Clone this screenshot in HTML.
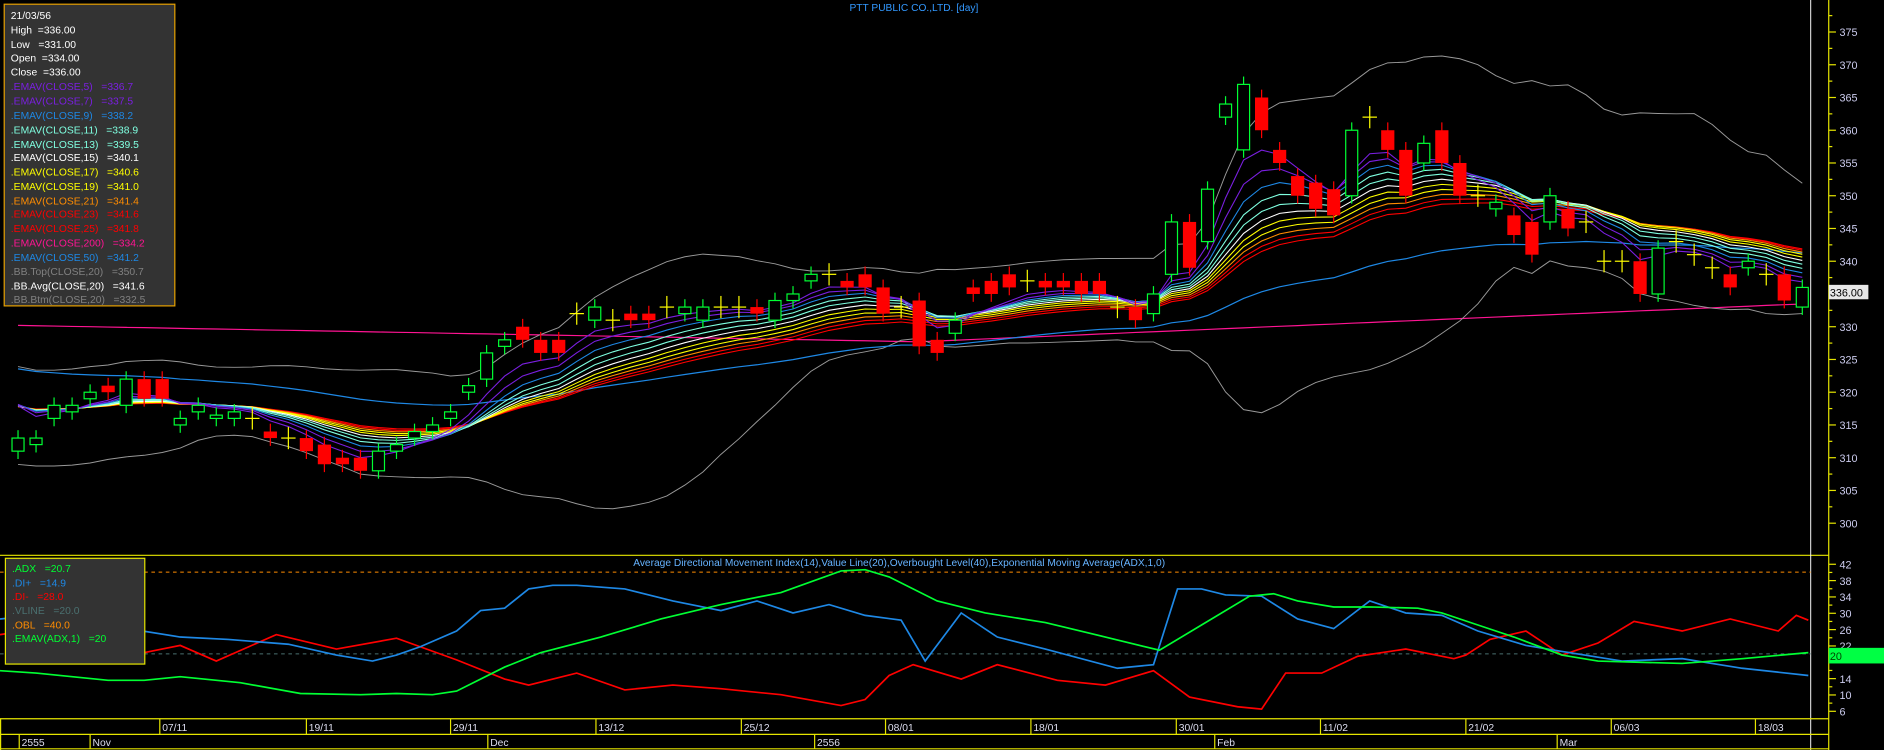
<!DOCTYPE html>
<html><head><meta charset="utf-8"><style>
html,body{margin:0;padding:0;background:#000;overflow:hidden}
svg{display:block}
text{font-family:"Liberation Sans",Arial,sans-serif;white-space:pre}
</style></head><body>
<svg id="s" width="1884" height="750" viewBox="0 0 1568 624" preserveAspectRatio="none" xmlns="http://www.w3.org/2000/svg" xml:space="preserve">
<rect width="1568" height="624" fill="#000"/>
<g id="main"></g>
<line x1="0" y1="462" x2="1522" y2="462" stroke="#e6e600" stroke-width="1"/>
<line x1="1522" y1="0" x2="1522" y2="624" stroke="#e6e600" stroke-width="1"/>
<line x1="1507" y1="0" x2="1507" y2="624" stroke="#fff" stroke-width="0.8"/>
<line x1="0" y1="598" x2="1522" y2="598" stroke="#e6e600"/>
<line x1="0" y1="611" x2="1522" y2="611" stroke="#e6e600"/>
<line x1="0" y1="623" x2="1522" y2="623" stroke="#e6e600"/>
<line x1="0.5" y1="598" x2="0.5" y2="624" stroke="#e6e600"/>
<text x="707" y="9" font-size="8.5" fill="#3399ff">PTT PUBLIC CO.,LTD. [day]</text>
<text x="527" y="471" font-size="8.5" fill="#66b3ff">Average Directional Movement Index(14),Value Line(20),Overbought Level(40),Exponential Moving Average(ADX,1,0)</text>
<g id="ind"></g>
<g id="axis"></g>
<g id="dates"></g>
<rect x="3.5" y="3.5" width="142" height="251" fill="#333" stroke="#e6a000" stroke-width="1"/>
<g font-size="8.6">
<text x="9" y="16" fill="#fff">21/03/56</text>
<text x="9" y="28" fill="#fff">High  =336.00</text>
<text x="9" y="40" fill="#fff">Low   =331.00</text>
<text x="9" y="51" fill="#fff">Open  =334.00</text>
<text x="9" y="63" fill="#fff">Close  =336.00</text>
<text x="9" y="75" fill="#7a1fe0">.EMAV(CLOSE,5)   =336.7</text>
<text x="9" y="87" fill="#7a1fe0">.EMAV(CLOSE,7)   =337.5</text>
<text x="9" y="99" fill="#1e88e5">.EMAV(CLOSE,9)   =338.2</text>
<text x="9" y="111" fill="#7fffe0">.EMAV(CLOSE,11)   =338.9</text>
<text x="9" y="123" fill="#7fffe0">.EMAV(CLOSE,13)   =339.5</text>
<text x="9" y="134" fill="#fff">.EMAV(CLOSE,15)   =340.1</text>
<text x="9" y="146" fill="#ffff00">.EMAV(CLOSE,17)   =340.6</text>
<text x="9" y="158" fill="#ffff00">.EMAV(CLOSE,19)   =341.0</text>
<text x="9" y="170" fill="#ff8c00">.EMAV(CLOSE,21)   =341.4</text>
<text x="9" y="181" fill="#ff0000">.EMAV(CLOSE,23)   =341.6</text>
<text x="9" y="193" fill="#ff0000">.EMAV(CLOSE,25)   =341.8</text>
<text x="9" y="205" fill="#ff1493">.EMAV(CLOSE,200)   =334.2</text>
<text x="9" y="217" fill="#1e88e5">.EMAV(CLOSE,50)   =341.2</text>
<text x="9" y="229" fill="#808080">.BB.Top(CLOSE,20)   =350.7</text>
<text x="9" y="241" fill="#fff">.BB.Avg(CLOSE,20)   =341.6</text>
<text x="9" y="252" fill="#808080">.BB.Btm(CLOSE,20)   =332.5</text>
</g>
<rect x="4.5" y="464.5" width="116" height="88" fill="#333" stroke="#e6e600" stroke-width="1"/>
<g font-size="8.6">
<text x="10" y="476" fill="#00ff33">.ADX   =20.7</text>
<text x="10" y="488" fill="#1e88e5">.DI+   =14.9</text>
<text x="10" y="499" fill="#ff0000">.DI-   =28.0</text>
<text x="10" y="511" fill="#4a7070">.VLINE   =20.0</text>
<text x="10" y="523" fill="#ff8c00">.OBL   =40.0</text>
<text x="10" y="534" fill="#00ff33">.EMAV(ADX,1)   =20</text>
</g>
</svg>
<script>
(function(){
var NS="http://www.w3.org/2000/svg";
function el(p,t,a,txt){var e=document.createElementNS(NS,t);for(var k in a)e.setAttribute(k,a[k]);if(txt!=null)e.textContent=txt;document.getElementById(p).appendChild(e);return e;}
function py(p){return 435.3-(p-300)*5.449;}
function iy(v){return 591.8-(v-6)*3.398;}
var B=[[311,313],[312,313],[316,318],[317,318],[319,320],[321,320],[318,322],[322,319],[322,319],[315,316],[317,318],[316,316.5],[316,317],[316,316],[314,313],[313,313],[313,311],[312,309],[310,309],[310,308],[308,311],[311,312],[313,314],[314,315],[316,317],[320,321],[322,326],[327,328],[330,328],[328,326],[328,326],[332,332],[331,333],[331,331],[332,331],[332,331],[333,333],[332,333],[331,333],[333,333],[333,333],[333,332],[331,334],[334,335],[337,338],[338,338],[337,336],[338,336],[336,332],[333,333],[334,327],[328,326],[329,331],[336,335],[337,335],[338,336],[337,337],[337,336],[337,336],[337,335],[337,335],[333,333],[333,331],[332,335],[338,346],[346,339],[343,351],[362,364],[357,367],[365,360],[357,355],[353,350],[352,348],[351,347],[350,360],[362,362],[360,357],[357,350],[355,358],[360,355],[355,350],[350,350],[348,349],[347,344],[346,341],[346,350],[348,345],[346,346],[340,340],[340,340],[340,335],[335,342],[343,343],[341,341],[339,339],[338,336],[339,340],[338,338],[338,334],[333,336]];
var hist=[318,322,325,327,326,324,321,318,315,313,312,313,315,314,312,311,313,316,318,319,320,322,323,321,320];
var C=hist.concat(B.map(function(b){return b[1];}));
var H=hist.length;
function X(i){return 15+15*i;}
function pts(arr){return arr.map(function(v,i){return X(i).toFixed(1)+","+py(v).toFixed(1);}).join(" ");}
var e200=B.map(function(b,i){return i<=50?330.2-i*0.05:327.7+(i-50)*0.118;});
el("main","polyline",{points:pts(e200),fill:"none",stroke:"#ff1493","stroke-width":1});
var bbt=[],bbb=[];
for(var i=0;i<B.length;i++){var s=0,q=0,j;for(j=H+i-19;j<=H+i;j++){s+=C[j];}var m=s/20;for(j=H+i-19;j<=H+i;j++){q+=(C[j]-m)*(C[j]-m);}var sd=Math.sqrt(q/20);bbt.push(m+2*sd);bbb.push(m-2*sd);}
el("main","polyline",{points:pts(bbt),fill:"none",stroke:"#999","stroke-width":0.8});
el("main","polyline",{points:pts(bbb),fill:"none",stroke:"#999","stroke-width":0.8});
var e50=[],e=324,k=2/51;for(i=0;i<B.length;i++){e=e+k*(B[i][1]-e);e50.push(e);}
el("main","polyline",{points:pts(e50),fill:"none",stroke:"#1e88e5","stroke-width":1});
var R=[[25,"#ff0000"],[23,"#ff0000"],[21,"#ff8c00"],[19,"#ffff00"],[17,"#ffff00"],[15,"#ffffff"],[13,"#7fffe0"],[11,"#7fffe0"],[9,"#1e88e5"],[7,"#7a1fe0"],[5,"#7a1fe0"]];
R.forEach(function(r){var kk=2/(r[0]+1),ee=C[0],out=[];for(var ii=0;ii<C.length;ii++){ee=ee+kk*(C[ii]-ee);if(ii>=H)out.push(ee);}el("main","polyline",{points:pts(out),fill:"none",stroke:r[1],"stroke-width":0.9});});
B.forEach(function(b,i){var x=X(i),o=b[0],c=b[1],hi=Math.max(o,c)+1.2,lo=Math.min(o,c)-1.2;
 if(Math.abs(o-c)<0.3){el("main","line",{x1:x,y1:py(hi+0.5),x2:x,y2:py(lo-0.5),stroke:"#ffff00"});el("main","line",{x1:x-6,y1:py(c),x2:x+6,y2:py(c),stroke:"#ffff00"});return;}
 var up=c>o,col=up?"#00ff33":"#ff0000";
 el("main","line",{x1:x,y1:py(hi),x2:x,y2:py(lo),stroke:col});
 var yt=py(Math.max(o,c)),yb=py(Math.min(o,c));
 if(up)el("main","rect",{x:x-5,y:yt,width:10,height:Math.max(yb-yt,1),fill:"#000",stroke:col,"stroke-width":1});
 else el("main","rect",{x:x-5.5,y:yt,width:11,height:Math.max(yb-yt,1.5),fill:col});
});
el("ind","line",{x1:0,y1:476,x2:1507,y2:476,stroke:"#ff8c00","stroke-dasharray":"3,3","stroke-width":0.8});
el("ind","line",{x1:0,y1:544,x2:1507,y2:544,stroke:"#4a7070","stroke-dasharray":"3,3","stroke-width":0.8});
var G="0,558 30,560 60,563 90,566 120,566 150,563 200,568 250,577 300,578 330,577 360,578 380,575 420,555 450,543 500,530 550,515 600,503 650,493 700,475 720,474 740,480 780,500 820,510 870,518 920,530 965,541 1000,520 1040,496 1060,494 1080,500 1110,505 1140,505 1180,506 1200,510 1230,520 1260,530 1300,545 1330,550 1400,552 1450,548 1505,543";
var BL="0,515 20,513 50,513 80,515 100,522 150,530 190,532 240,536 280,545 310,550 330,545 350,538 380,525 400,508 420,506 440,490 460,487 480,487 520,490 560,500 600,508 630,500 660,510 690,503 720,512 750,516 770,550 800,510 830,530 870,540 930,556 960,553 980,490 1000,490 1020,495 1050,496 1080,515 1110,523 1140,500 1170,510 1200,512 1230,525 1270,537 1300,542 1350,550 1400,548 1450,556 1505,562";
var RD="0,528 20,525 50,520 80,535 110,545 150,537 180,550 230,528 280,540 330,531 380,549 420,565 440,570 480,560 520,574 560,570 600,573 650,578 700,587 720,582 740,562 760,553 800,565 830,553 880,566 920,570 960,558 990,580 1030,588 1050,590 1070,560 1100,560 1130,546 1170,540 1210,548 1220,545 1240,532 1270,525 1300,545 1330,535 1360,517 1400,525 1440,515 1480,525 1495,512 1505,516";
el("ind","polyline",{points:RD,fill:"none",stroke:"#ff0000","stroke-width":1.4});
el("ind","polyline",{points:BL,fill:"none",stroke:"#1e88e5","stroke-width":1.4});
el("ind","polyline",{points:G,fill:"none",stroke:"#00ff33","stroke-width":1.4});
for(var p=300;p<=375;p+=5){var y=py(p);el("axis","line",{x1:1522,y1:y,x2:1528,y2:y,stroke:"#e6e600"});el("axis","text",{x:1531,y:y+3.5,"font-size":"9","fill":"#cce"},String(p));
 el("axis","line",{x1:1522,y1:py(p+2.5),x2:1525,y2:py(p+2.5),stroke:"#e6e600"});}
for(var v=6;v<=42;v+=2){var yy=iy(v);el("axis","line",{x1:1522,y1:yy,x2:v%4==2?1528:1525,y2:yy,stroke:"#e6e600"});
 if(v%4==2&&v!=18)el("axis","text",{x:1531,y:yy+3.5,"font-size":"9","fill":"#cce"},String(v));}
el("axis","rect",{x:1522,y:539,width:46,height:13,fill:"#00ff44"});
el("axis","text",{x:1523,y:549,"font-size":"9","fill":"#004400"},"20");
el("axis","rect",{x:1522,y:237,width:33,height:12,fill:"#e8e8e8"});
el("axis","text",{x:1523,y:246.5,"font-size":"9","fill":"#000"},"336.00");
[[135,"07/11"],[257,"19/11"],[377,"29/11"],[498,"13/12"],[619,"25/12"],[739,"08/01"],[860,"18/01"],[981,"30/01"],[1101,"11/02"],[1222,"21/02"],[1343,"06/03"],[1463,"18/03"]].forEach(function(d){el("dates","line",{x1:d[0]-2,y1:598,x2:d[0]-2,y2:611,stroke:"#e6e600"});el("dates","text",{x:d[0],y:608,"font-size":"8.6","fill":"#dde"},d[1]);});
[[18,"2555"],[77,"Nov"],[408,"Dec"],[680,"2556"],[1013,"Feb"],[1298,"Mar"]].forEach(function(d){el("dates","line",{x1:d[0]-2,y1:611,x2:d[0]-2,y2:623,stroke:"#e6e600"});el("dates","text",{x:d[0],y:620.5,"font-size":"8.6","fill":"#dde"},d[1]);});
})();
</script>
</body></html>
